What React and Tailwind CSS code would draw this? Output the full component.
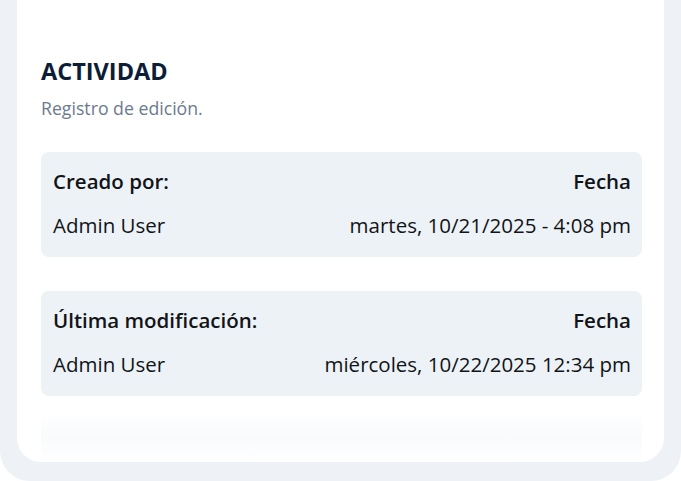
const ROWS = [
  { label: 'Creado por:', user: 'Admin User', date: 'martes, 10/21/2025 - 4:08 pm' },
  { label: 'Última modificación:', user: 'Admin User', date: 'miércoles, 10/22/2025 12:34 pm' },
];

export default function App() {
  return (
    <div className="w-[681px] h-[481px] bg-white overflow-hidden" style={{ fontFamily: '"Open Sans", "Noto Sans", sans-serif' }}>
      <div className="bg-[#eef2f7] px-[17px] pb-[19px] rounded-b-[30px]">
        <div className="bg-white rounded-b-[24px] pl-6 pr-[22px] pt-[55px]">
          <h2 className="text-[23.5px] font-bold leading-8 text-[#0c1d38]">ACTIVIDAD</h2>
          <p className="mt-[9px] text-[17.7px] leading-6 text-[#6b7a8e]">Registro de edición.</p>

          <div className="mt-[32px] flex flex-col gap-[34px]">
            {ROWS.map((r) => (
              <div key={r.label} className="h-[105px] bg-[#edf2f6] rounded-lg pl-3 pr-[11px] pt-[14px] text-[#111418]">
                <div className="flex justify-between text-[20.5px] font-semibold leading-[30px]">
                  <span>{r.label}</span>
                  <span>Fecha</span>
                </div>
                <div className="mt-[14px] flex justify-between text-[20.5px] leading-[30px]">
                  <span>{r.user}</span>
                  <span>{r.date}</span>
                </div>
              </div>
            ))}
          </div>

          <div className="mt-[16px] h-[50px] bg-gradient-to-b from-white via-[#f8fafc] to-white" />
        </div>
      </div>
    </div>
  );
}
